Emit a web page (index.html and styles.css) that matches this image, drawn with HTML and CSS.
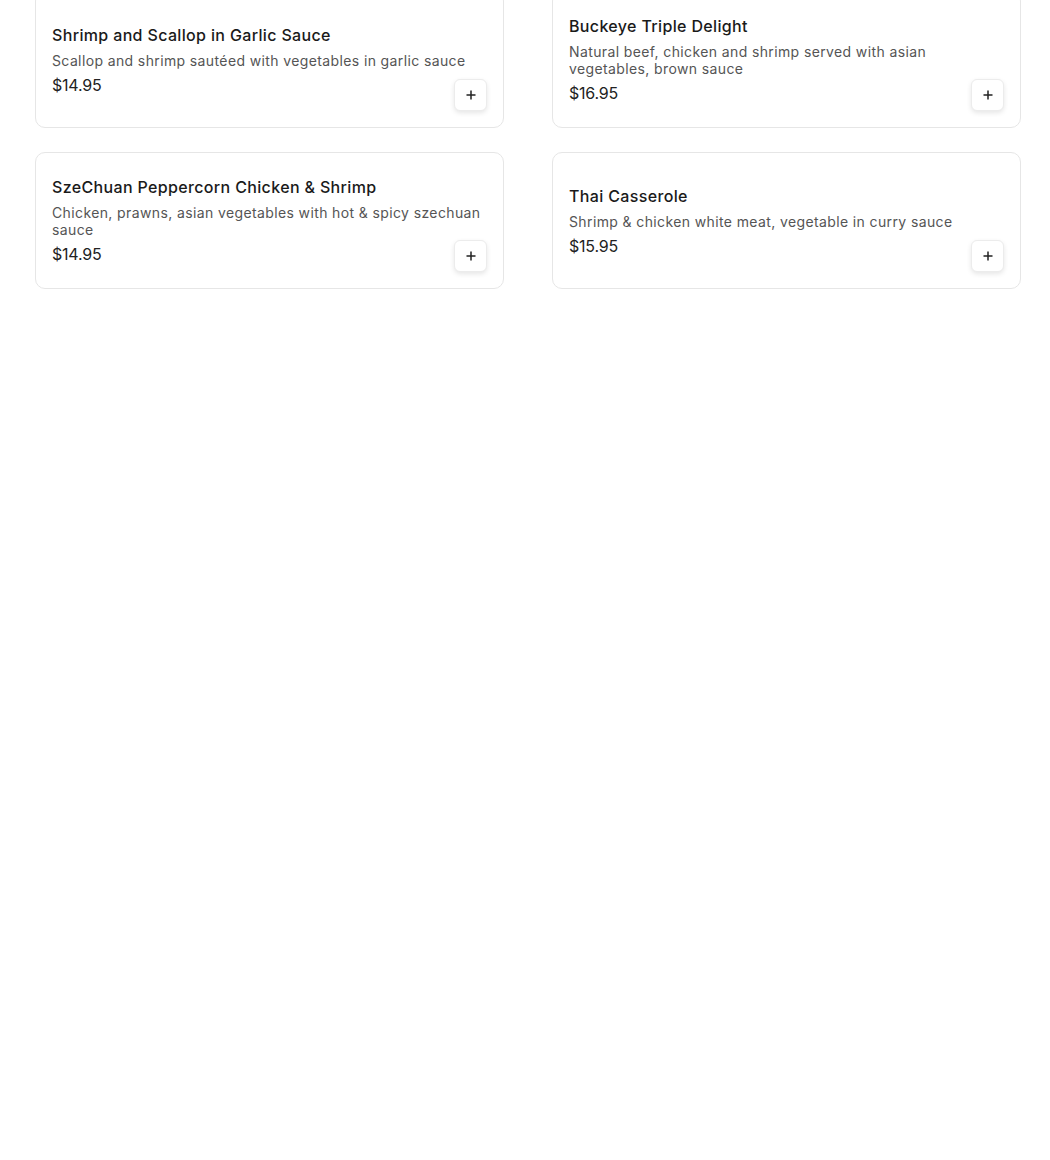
FILE: index.html
```html
<!DOCTYPE html>
<html lang="en">
<head>
    <meta charset="UTF-8">
    <meta name="viewport" content="width=device-width, initial-scale=1.0">
    <title>Menu</title>
    <link rel="stylesheet" href="styles.css">
</head>
<body>
    <div class="menu-grid">
        <div class="menu-item">
            <div class="item-info">
                <h3 class="item-name">Shrimp and Scallop in Garlic Sauce</h3>
                <p class="item-desc">Scallop and shrimp sautéed with vegetables in garlic sauce</p>
                <div class="item-price">$14.95</div>
            </div>
            <button class="add-button" aria-label="Add">
                <svg width="12" height="12" viewBox="0 0 12 12"><path d="M6 1.5v9M1.5 6h9" stroke="#222" stroke-width="1.5" fill="none"/></svg>
            </button>
        </div>

        <div class="menu-item">
            <div class="item-info">
                <h3 class="item-name">Buckeye Triple Delight</h3>
                <p class="item-desc">Natural beef, chicken and shrimp served with asian vegetables, brown sauce</p>
                <div class="item-price">$16.95</div>
            </div>
            <button class="add-button" aria-label="Add">
                <svg width="12" height="12" viewBox="0 0 12 12"><path d="M6 1.5v9M1.5 6h9" stroke="#222" stroke-width="1.5" fill="none"/></svg>
            </button>
        </div>

        <div class="menu-item">
            <div class="item-info">
                <h3 class="item-name">SzeChuan Peppercorn Chicken &amp; Shrimp</h3>
                <p class="item-desc">Chicken, prawns, asian vegetables with hot &amp; spicy szechuan sauce</p>
                <div class="item-price">$14.95</div>
            </div>
            <button class="add-button" aria-label="Add">
                <svg width="12" height="12" viewBox="0 0 12 12"><path d="M6 1.5v9M1.5 6h9" stroke="#222" stroke-width="1.5" fill="none"/></svg>
            </button>
        </div>

        <div class="menu-item">
            <div class="item-info">
                <h3 class="item-name">Thai Casserole</h3>
                <p class="item-desc">Shrimp &amp; chicken white meat, vegetable in curry sauce</p>
                <div class="item-price">$15.95</div>
            </div>
            <button class="add-button" aria-label="Add">
                <svg width="12" height="12" viewBox="0 0 12 12"><path d="M6 1.5v9M1.5 6h9" stroke="#222" stroke-width="1.5" fill="none"/></svg>
            </button>
        </div>
    </div>
</body>
</html>
```

FILE: styles.css
```css
* {
    margin: 0;
    padding: 0;
    box-sizing: border-box;
}

body {
    font-family: Inter, 'Noto Sans', sans-serif;
    background: #fff;
    color: #1a1a1a;
}

.menu-grid {
    display: grid;
    grid-template-columns: 1fr 1fr;
    column-gap: 48px;
    row-gap: 24px;
    margin-top: -9px;
    padding: 0 29px 0 35px;
}

.menu-item {
    position: relative;
    display: flex;
    align-items: center;
    min-height: 137px;
    padding: 16px;
    border: 1px solid #e6e6e6;
    border-radius: 10px;
    background: #fff;
}

.item-info {
    flex: 1;
}

.item-name {
    font-size: 16px;
    line-height: 20px;
    font-weight: 500;
    letter-spacing: 0.35px;
    color: #1a1a1a;
    margin-bottom: 7px;
}

.item-desc {
    font-size: 14px;
    line-height: 17px;
    letter-spacing: 0.38px;
    color: #555;
    margin-bottom: 6px;
}

.item-price {
    font-size: 16px;
    line-height: 20px;
    letter-spacing: -0.2px;
    color: #222;
}

/* sits in the bottom corner, over the card */
.add-button {
    position: absolute;
    right: 16px;
    bottom: 16px;
    width: 33px;
    height: 32px;
    display: flex;
    align-items: center;
    justify-content: center;
    background: #fff;
    border: 1px solid #ececec;
    border-radius: 6px;
    box-shadow: 0 2px 5px rgba(0, 0, 0, 0.1);
    cursor: pointer;
}
```
